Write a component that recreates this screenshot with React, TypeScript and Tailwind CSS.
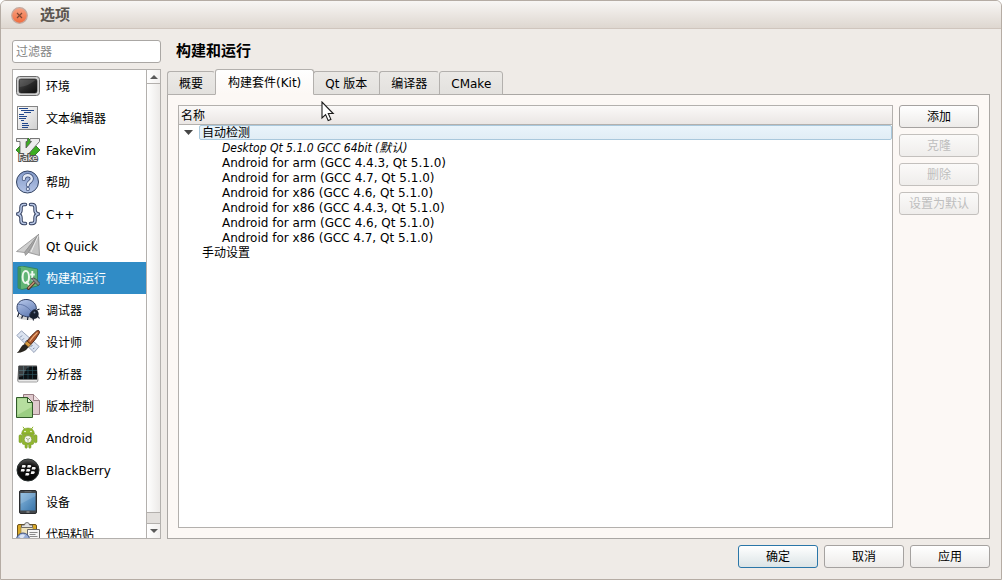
import { useState } from "react";
import type { ReactNode } from "react";

const iconProps = { width: 24, height: 24, viewBox: "0 0 24 24", "aria-hidden": true } as const;

const EnvironmentIcon = () => (
  <svg {...iconProps}>
    <defs>
      <linearGradient id="env" x1="0" y1="0" x2="1" y2="1">
        <stop offset="0" stopColor="#555" />
        <stop offset="0.5" stopColor="#2a2a2a" />
        <stop offset="1" stopColor="#0c0c0c" />
      </linearGradient>
    </defs>
    <rect x="0.5" y="2.5" width="23" height="19" rx="3" fill="#cfcfcf" stroke="#6a6a6a" />
    <rect x="3" y="5" width="18" height="14" rx="2" fill="url(#env)" stroke="#1c1c1c" strokeWidth="0.6" />
    <path d="M3.5 13 Q13 12 20 5.5 L4 5.5Z" fill="#777" opacity="0.35" />
  </svg>
);

const TextEditorIcon = () => (
  <svg {...iconProps}>
    <defs>
      <linearGradient id="doc" x1="0" y1="0" x2="1" y2="1">
        <stop offset="0" stopColor="#fff" />
        <stop offset="1" stopColor="#cfcfcf" />
      </linearGradient>
    </defs>
    <rect x="1.5" y="0.5" width="20" height="23" fill="url(#doc)" stroke="#848484" />
    <path d="M3 2.5h9M5 4.5h13M8 6.5h7M3 8.5h5M3 10.5h8M3 12.5h7M5 14.5h3M6 17.5h6M6 19.5h7M6 21.5h6" stroke="#20478c" />
  </svg>
);

const FakeVimIcon = () => (
  <svg {...iconProps}>
    <path d="M12 0 L24 12 L12 24 L0 12Z" fill="#3cae22" stroke="#1d6a12" strokeWidth="0.8" />
    <path
      d="M0.5 0.5H11.5V3.5H10V10L15.5 3.5H14V0.5H23.5V3.5L9 20H4V3.5H0.5Z"
      fill="#ededed"
      stroke="#555"
      strokeWidth="0.8"
    />
    <text
      x="12"
      y="22.5"
      textAnchor="middle"
      fontFamily="DejaVu Sans Condensed, DejaVu Sans"
      fontSize="9.5"
      fill="#fff"
      stroke="#555"
      strokeWidth="2.2"
      paintOrder="stroke"
    >
      Fake
    </text>
  </svg>
);

const HelpIcon = () => (
  <svg {...iconProps}>
    <defs>
      <linearGradient id="help" x1="0" y1="0" x2="0" y2="1">
        <stop offset="0" stopColor="#8299c8" />
        <stop offset="1" stopColor="#b4c4e6" />
      </linearGradient>
    </defs>
    <circle cx="11.5" cy="12" r="11" fill="url(#help)" stroke="#334361" />
    <g fill="none" strokeLinecap="round">
      <path d="M7.8 9C7.8 4 15.8 4 15.8 8.8C15.8 12 11.8 11.6 11.8 15M11.8 19v.1" stroke="#3f5078" strokeWidth="4" />
      <path d="M7.8 9C7.8 4 15.8 4 15.8 8.8C15.8 12 11.8 11.6 11.8 15M11.8 19v.1" stroke="#e0e7f4" strokeWidth="2.4" />
    </g>
  </svg>
);

const bracePath =
  "M9.5 2.5H8Q5 2.5 5 5.5V8Q5 11 2 12Q5 13 5 16V18.5Q5 21.5 8 21.5H9.5M14.5 2.5H16Q19 2.5 19 5.5V8Q19 11 22 12Q19 13 19 16V18.5Q19 21.5 16 21.5H14.5";

const CppIcon = () => (
  <svg {...iconProps}>
    <path d={bracePath} fill="none" stroke="#34405f" strokeWidth="3.5" strokeLinecap="round" />
    <path d={bracePath} fill="none" stroke="#b9c8e6" strokeWidth="1.5" strokeLinecap="round" />
  </svg>
);

const QtQuickIcon = () => (
  <svg {...iconProps}>
    <path d="M22.5 0.5L0.5 17.5L8.5 18.5Z" fill="#cfcfcf" stroke="#909090" strokeWidth="0.8" />
    <path d="M22.5 0.5L8.5 18.5L9.5 21.5L13 18Z" fill="#a6a6a6" stroke="#888" strokeWidth="0.6" />
    <path d="M22.5 0.5L12.5 18.5L23.5 21.5Z" fill="#c4c4c4" stroke="#8a8a8a" strokeWidth="0.8" />
    <path d="M22.3 1.5L15 18" stroke="#ececec" />
  </svg>
);

const BuildIcon = () => (
  <svg {...iconProps}>
    <path d="M2 1L6 0L21.5 3V20L6 23.5L2 22Z" fill="#62b576" stroke="#2f7f55" strokeWidth="0.8" />
    <path d="M2 1L5 2V23L2 22Z" fill="#3d9360" />
    <ellipse cx="9.8" cy="11" rx="3.2" ry="6" fill="none" stroke="#eef8f0" strokeWidth="2" />
    <path d="M10.5 15l2.4 4M16.3 5V13Q16.3 15 18.2 14.4M14.2 8.5H18.8" fill="none" stroke="#eef8f0" strokeWidth="1.9" />
    <path d="M12.5 22.3L19 15.5" stroke="#493024" strokeWidth="3.2" strokeLinecap="round" />
    <path d="M12.5 22L19 15.3" stroke="#bd9072" strokeWidth="1.7" strokeLinecap="round" />
    <path d="M15.2 12.8Q17.5 11 19.5 12.8L24 17.5L22.2 19.7L18.5 16Q17 14 15.2 12.8Z" fill="#858a88" stroke="#3a3f3d" strokeWidth="0.8" />
  </svg>
);

const DebuggerIcon = () => (
  <svg {...iconProps}>
    <defs>
      <linearGradient id="bug" x1="0.2" y1="0" x2="0.7" y2="1">
        <stop offset="0" stopColor="#b4c5e9" />
        <stop offset="1" stopColor="#5f7ab2" />
      </linearGradient>
    </defs>
    <ellipse cx="12" cy="19.5" rx="10" ry="2.4" fill="#aaa" opacity="0.5" />
    <path d="M3 15L1.5 19M7 17L5.5 20.5M12 18L11.5 22M21 12L23.5 11M21.5 18L23.5 20.5M17 20L17.5 22.5" stroke="#1c2230" strokeWidth="1.2" />
    <circle cx="17.8" cy="16" r="4.9" fill="#17202e" />
    <path d="M1 9.5C1 4 6 1.2 11 1.5C17 2 20.8 6.5 20.3 11.2C16 11.5 13.5 14.5 13.3 19C6 18.5 1 15.5 1 9.5Z" fill="url(#bug)" stroke="#2e3d60" />
    <path d="M2.5 6.5C8 6 12.5 10 15 13" fill="none" stroke="#53699c" strokeWidth="0.8" />
    <circle cx="18.5" cy="14.5" r="0.9" fill="#75839c" />
  </svg>
);

const DesignerIcon = () => (
  <svg {...iconProps}>
    <path d="M0.8 5.5L5.5 0.8L23.2 16.5L18 22.5Z" fill="#dbe3f0" stroke="#8e9bb2" strokeWidth="0.9" />
    <path d="M4 7.5l2-2M6.5 9.8l1.4-1.4M9 12l2-2M14.5 17l2-2M17 19.2l1.4-1.4" stroke="#7786a3" />
    <path d="M20.5 1Q24 -0.6 23.4 3Q20 9.5 14.8 14.6L10.8 11.4Q15 5.5 20.5 1Z" fill="#a9532a" stroke="#4b2412" strokeWidth="0.9" />
    <path d="M21.5 2.5Q17 6.5 13.6 11.5" fill="none" stroke="#f0b07c" strokeWidth="1.2" />
    <path d="M11 11.2L15 14.4L12.5 17L8.6 13.9Z" fill="#d99a3f" stroke="#5b3c14" strokeWidth="0.8" />
    <path d="M8.6 13.9L12.5 17.2Q9 22.4 0.8 23Q3.5 20.5 4.5 18Q6 15 8.6 13.9Z" fill="#29251f" />
  </svg>
);

const AnalyzerIcon = () => (
  <svg {...iconProps}>
    <path d="M3 3.5H20.5L22 18Q22 20 20.5 20H3Q1.5 20 1.5 18Z" fill="#d2d2d2" stroke="#8c8c8c" strokeWidth="0.8" />
    <rect x="2.5" y="4" width="18.5" height="13.5" fill="#0c1013" />
    <path d="M3 8.5H21M3 12.5H21M7.5 4V17M12 4V17M16.5 4V17" stroke="#2e5964" strokeWidth="0.6" />
    <path d="M3 15L7 14L11 6L14 5H21V4H3Z" fill="#fff" opacity="0.2" />
    <path d="M3 18.8H21" stroke="#f2f2f2" />
  </svg>
);

const VersionIcon = () => (
  <svg {...iconProps}>
    <path d="M7.5 0.5H17.5L23.5 6.5V20.5H7.5Z" fill="#dfc9cd" stroke="#967b81" />
    <path d="M17.5 0.5V6.5H23.5" fill="#f0e3e5" stroke="#967b81" />
    <path d="M0.5 3.5H11.5L16.5 8.5V23.5H0.5Z" fill="#9bce83" stroke="#315a29" />
    <path d="M1.5 4.5H11V9H15.5V13L1.5 21Z" fill="#c5e6ae" opacity="0.65" />
    <path d="M11.5 3.5V8.5H16.5Z" fill="#dff2d0" stroke="#315a29" />
  </svg>
);

const AndroidIcon = () => (
  <svg {...iconProps}>
    <g fill="#91b82d" stroke="#6a8d1c" strokeWidth="0.5">
      <path d="M8.5 3L7 0.8M15.5 3L17 0.8" stroke="#91b82d" strokeWidth="1" />
      <path d="M5.5 8.2Q6 2 12 2T18.5 8.2Z" />
      <rect x="3" y="8.8" width="2.8" height="8" rx="1.4" />
      <rect x="18.2" y="8.8" width="2.8" height="8" rx="1.4" />
      <path d="M6.3 8.6H17.7V17Q17.7 18.5 16 18.5H15V21Q15 22.3 13.9 22.3T12.7 21V18.5H11.3V21Q11.3 22.3 10.2 22.3T9 21V18.5H8Q6.3 18.5 6.3 17Z" />
    </g>
    <circle cx="9" cy="5.5" r="0.8" fill="#fff" />
    <circle cx="15" cy="5.5" r="0.8" fill="#fff" />
    <circle cx="12" cy="13.3" r="3.8" fill="#f5f7ee" stroke="#688524" strokeWidth="0.6" />
    <path d="M9.9 12.2L12 13.4L14.1 12.2M12 13.4V15.8" fill="none" stroke="#a3b187" />
  </svg>
);

const BlackBerryIcon = () => (
  <svg {...iconProps}>
    <defs>
      <radialGradient id="bb" cx="0.5" cy="0.9" r="0.9">
        <stop offset="0" stopColor="#050505" />
        <stop offset="0.7" stopColor="#111" />
        <stop offset="1" stopColor="#5c5c5c" />
      </radialGradient>
    </defs>
    <circle cx="12" cy="12" r="11" fill="url(#bb)" stroke="#28302f" />
    <g fill="#f5f5f5">
      <path d="M6.3 7H8.7Q10.3 7.2 9.8 8.5T8 9.6H5.7ZM11.7 7H14.1Q15.7 7.2 15.2 8.5T13.4 9.6H11.1Z" />
      <path d="M5.3 11H7.7Q9.3 11.2 8.8 12.5T7 13.6H4.7ZM10.7 11H13.1Q14.7 11.2 14.2 12.5T12.4 13.6H10.1ZM16.2 9H18.6Q20.2 9.2 19.7 10.5T17.9 11.6H15.6Z" />
      <path d="M9.8 15H12.2Q13.8 15.2 13.3 16.5T11.5 17.6H9.2ZM15.3 13.3H17.7Q19.3 13.5 18.8 14.8T17 15.9H14.7Z" />
    </g>
  </svg>
);

const DeviceIcon = () => (
  <svg {...iconProps}>
    <defs>
      <linearGradient id="dev" x1="0" y1="0" x2="1" y2="1">
        <stop offset="0" stopColor="#86b7dd" />
        <stop offset="1" stopColor="#3a75aa" />
      </linearGradient>
    </defs>
    <rect x="3.5" y="0.5" width="17" height="23" rx="1.5" fill="#44484c" stroke="#2a2c2e" />
    <rect x="4.5" y="3" width="15" height="17.5" fill="url(#dev)" />
    <path d="M4.5 14L19.5 6V3H4.5Z" fill="#fff" opacity="0.15" />
    <path d="M10.5 22h3" stroke="#aaa" />
    <path d="M8.5 1.7h7" stroke="#777" strokeWidth="0.7" />
  </svg>
);

const PasteIcon = () => (
  <svg {...iconProps}>
    <rect x="1.5" y="2.5" width="19" height="21" rx="1.5" fill="#d9a928" stroke="#6c511a" />
    <path d="M5 5H17V21H5Z" fill="#f0e4bd" stroke="#8d7a3f" strokeWidth="0.6" />
    <path d="M5.5 5.5V3H8.5Q8.5 0.5 11 0.5T13.5 3H16.5V5.5Z" fill="#e2e2e2" stroke="#555" strokeWidth="0.8" />
    <path d="M11.5 7.5H23.5V23.5H11.5Z" fill="#f6f6f6" stroke="#686868" />
    <path d="M13.5 10.5h8M13.5 12.5h6M13.5 14.5h8" stroke="#8b8b8b" />
    <circle cx="7" cy="17.5" r="6.5" fill="#95abd6" stroke="#40527b" />
    <path d="M3 14.5Q6 11 9 13Q8 16.5 5 16.5Z" fill="#dce5f5" />
  </svg>
);

const categories: { label: string; icon: ReactNode }[] = [
  { label: "环境", icon: <EnvironmentIcon /> },
  { label: "文本编辑器", icon: <TextEditorIcon /> },
  { label: "FakeVim", icon: <FakeVimIcon /> },
  { label: "帮助", icon: <HelpIcon /> },
  { label: "C++", icon: <CppIcon /> },
  { label: "Qt Quick", icon: <QtQuickIcon /> },
  { label: "构建和运行", icon: <BuildIcon /> },
  { label: "调试器", icon: <DebuggerIcon /> },
  { label: "设计师", icon: <DesignerIcon /> },
  { label: "分析器", icon: <AnalyzerIcon /> },
  { label: "版本控制", icon: <VersionIcon /> },
  { label: "Android", icon: <AndroidIcon /> },
  { label: "BlackBerry", icon: <BlackBerryIcon /> },
  { label: "设备", icon: <DeviceIcon /> },
  { label: "代码粘贴", icon: <PasteIcon /> },
];

const tabs = ["概要", "构建套件(Kit)", "Qt 版本", "编译器", "CMake"];

const kits = [
  "Android for arm (GCC 4.4.3, Qt 5.1.0)",
  "Android for arm (GCC 4.7, Qt 5.1.0)",
  "Android for x86 (GCC 4.6, Qt 5.1.0)",
  "Android for x86 (GCC 4.4.3, Qt 5.1.0)",
  "Android for arm (GCC 4.6, Qt 5.1.0)",
  "Android for x86 (GCC 4.7, Qt 5.1.0)",
];

function PushButton({ children, disabled, primary }: { children: ReactNode; disabled?: boolean; primary?: boolean }) {
  const tone = primary
    ? "border-[#2a76a8] bg-linear-to-b from-white to-[#dbe4e6] text-black"
    : disabled
      ? "border-[#c3c0bd] bg-linear-to-b from-[#fbfaf9] to-[#efedeb] text-[#bebebe]"
      : "border-[#a5a2a0] bg-linear-to-b from-white to-[#edebe9] text-black";
  return (
    <button disabled={disabled} className={`flex h-[23px] w-20 items-center justify-center rounded-[3px] border pt-0.5 ${tone}`}>
      {children}
    </button>
  );
}

function Arrow({ up }: { up?: boolean }) {
  return (
    <svg width="8" height="4" viewBox="0 0 8 4" aria-hidden="true">
      <path d={up ? "M0 4L4 0L8 4Z" : "M0 0L4 4L8 0Z"} fill="#5a5a5a" />
    </svg>
  );
}

function Sidebar() {
  const [selected, setSelected] = useState("构建和运行");
  return (
    <aside className="flex w-[149px] shrink-0 flex-col gap-1.5">
      <input
        type="text"
        aria-label="过滤器"
        placeholder="过滤器"
        className="h-[23px] w-full shrink-0 rounded-[3px] border border-[#aaa7a4] bg-white px-[3px] outline-none placeholder:text-[#858585]"
      />
      <div className="flex min-h-0 flex-1 border border-[#b3b0ad] bg-white">
        <nav className="min-w-0 flex-1 overflow-hidden">
          {categories.map(({ label, icon }) => (
            <button
              key={label}
              onClick={() => setSelected(label)}
              className={`flex h-8 w-full items-center gap-1.5 px-[3px] text-left whitespace-nowrap ${
                label === selected ? "bg-[#308cc6] text-white" : "text-black"
              }`}
            >
              <span className="shrink-0">{icon}</span>
              <span className="pt-0.5">{label}</span>
            </button>
          ))}
        </nav>
        <div className="flex w-3.5 shrink-0 flex-col border-l border-[#b3b0ad] bg-[#e3e0dd]">
          <button aria-label="向上滚动" className="flex h-3.5 items-center justify-center border-b border-[#b3b0ad] bg-linear-to-r from-white to-[#f2f0ef]">
            <Arrow up />
          </button>
          <div className="flex-1 bg-linear-to-r from-white to-[#eceae8]" />
          <div className="h-3 border-y border-[#b3b0ad]" />
          <button aria-label="向下滚动" className="flex h-3.5 items-center justify-center bg-linear-to-r from-white to-[#f2f0ef]">
            <Arrow />
          </button>
        </div>
      </div>
    </aside>
  );
}

function KitTable() {
  return (
    <div className="min-w-0 flex-1 border border-[#b3b0ad] bg-white">
      <table className="w-full border-separate border-spacing-0 leading-[15px]">
        <thead>
          <tr>
            <th className="h-[19px] border-b border-[#b3b0ad] bg-linear-to-b from-[#fbf9f8] to-[#eae6e4] px-0.5 pt-0.5 pb-0 text-left font-normal">
              名称
            </th>
          </tr>
        </thead>
        <tbody>
          <tr>
            <td className="p-0">
              <div className="flex">
                <button aria-label="折叠" className="flex h-[15px] w-5 items-center justify-center">
                  <svg width="10" height="5" viewBox="0 0 10 5" aria-hidden="true">
                    <path d="M0 0H9L4.5 5Z" fill="#474747" />
                  </svg>
                </button>
                <span className="h-[15px] flex-1 rounded-xs border border-[#a9c8dc] bg-linear-to-b from-[#e9f4fb] to-[#e1edf5] px-0.5 leading-[15px]">
                  自动检测
                </span>
              </div>
            </td>
          </tr>
          <tr>
            <td className="h-4 pt-px pr-0 pb-0 pl-[43px] font-['DejaVu_Sans_Condensed','DejaVu_Sans','Noto_Sans_CJK_SC',sans-serif] italic">
              Desktop Qt 5.1.0 GCC 64bit (默认)
            </td>
          </tr>
          {kits.map((kit) => (
            <tr key={kit}>
              <td className="h-[15px] py-0 pr-0 pl-[43px]">{kit}</td>
            </tr>
          ))}
          <tr>
            <td className="h-[15px] py-0 pr-0 pl-[23px]">手动设置</td>
          </tr>
        </tbody>
      </table>
    </div>
  );
}

export default function App() {
  const [tab, setTab] = useState("构建套件(Kit)");
  return (
    <div className="relative flex h-screen flex-col overflow-hidden rounded-t-md border border-[#b5aca4] bg-[#efebe7] font-['DejaVu_Sans','Noto_Sans_CJK_SC',sans-serif] text-[12px] leading-[15px] text-black">
      <header className="flex h-7 shrink-0 items-center gap-3 border-b border-[#cfc5bd] bg-linear-to-b from-[#f8f6f4] to-[#ded7d0] pt-px pl-2.5">
        <button aria-label="关闭" className="flex">
          <svg width="17" height="17" viewBox="0 0 17 17" aria-hidden="true">
            <defs>
              <linearGradient id="close" x1="0" y1="0" x2="0" y2="1">
                <stop offset="0" stopColor="#f7a384" />
                <stop offset="1" stopColor="#f06a3c" />
              </linearGradient>
            </defs>
            <circle cx="8.5" cy="8.5" r="7.8" fill="url(#close)" stroke="#c4aaa0" strokeWidth="1.2" />
            <path d="M6 6L11 11M11 6L6 11" stroke="#7d4733" strokeWidth="1.2" />
          </svg>
        </button>
        <span className="text-[15px] font-bold text-[#5c5650]">选项</span>
      </header>

      <div className="flex min-h-0 flex-1 gap-1.5 px-[11px] pt-[11px]">
        <Sidebar />
        <main className="flex min-w-0 flex-1 flex-col">
          <h1 className="flex h-[23px] shrink-0 items-center pl-[9px] text-[15px] font-bold">构建和运行</h1>
          <div role="tablist" className="z-10 mt-1.5 -mb-px flex h-[26px] shrink-0 items-end">
            {tabs.map((name) => {
              const active = name === tab;
              return (
                <button
                  key={name}
                  role="tab"
                  aria-selected={active}
                  onClick={() => setTab(name)}
                  className={`rounded-t-[3px] border ${
                    active
                      ? "z-10 -mr-px h-[26px] border-[#b3b0ad] border-b-[#fcf8f5] bg-linear-to-b from-white to-[#fcf8f5] px-3 pt-0.5"
                      : "h-6 border-[#b3b0ad] border-r-transparent bg-linear-to-b from-[#ebe9e6] to-[#e3e1de] px-[11px] pt-0.5 last:border-r-[#b3b0ad]"
                  }`}
                >
                  {name}
                </button>
              );
            })}
          </div>
          <section role="tabpanel" className="flex min-h-0 flex-1 gap-1.5 border border-[#aaa7a4] bg-[#fcf8f5] p-2.5">
            <KitTable />
            <div className="flex flex-col gap-1.5">
              <PushButton>添加</PushButton>
              <PushButton disabled>克隆</PushButton>
              <PushButton disabled>删除</PushButton>
              <PushButton disabled>设置为默认</PushButton>
            </div>
          </section>
        </main>
      </div>

      <footer className="flex shrink-0 justify-end gap-1.5 px-[11px] pt-1.5 pb-[11px]">
        <PushButton primary>确定</PushButton>
        <PushButton>取消</PushButton>
        <PushButton>应用</PushButton>
      </footer>

      <svg className="pointer-events-none absolute top-[100px] left-80 z-20" width="14" height="21" viewBox="0 0 14 21" aria-hidden="true">
        <path d="M1 1V17L4.6 13.6L7.2 19.6L9.9 18.4L7.3 12.5H12.2Z" fill="#fff" stroke="#1a1a1a" strokeWidth="1.1" />
      </svg>
    </div>
  );
}
